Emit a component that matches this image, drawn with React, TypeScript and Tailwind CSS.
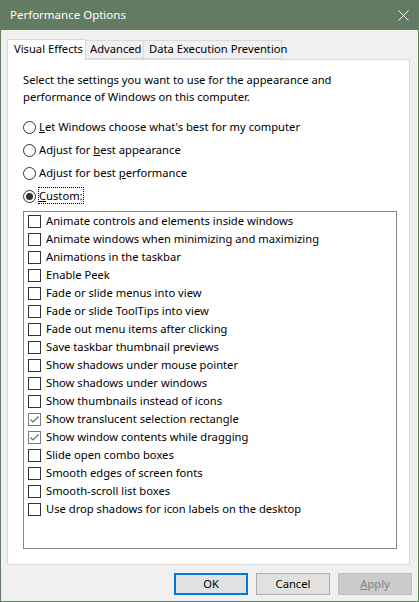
import React from "react";

const effects: { label: string; checked?: boolean }[] = [
  { label: "Animate controls and elements inside windows" },
  { label: "Animate windows when minimizing and maximizing" },
  { label: "Animations in the taskbar" },
  { label: "Enable Peek" },
  { label: "Fade or slide menus into view" },
  { label: "Fade or slide ToolTips into view" },
  { label: "Fade out menu items after clicking" },
  { label: "Save taskbar thumbnail previews" },
  { label: "Show shadows under mouse pointer" },
  { label: "Show shadows under windows" },
  { label: "Show thumbnails instead of icons" },
  { label: "Show translucent selection rectangle", checked: true },
  { label: "Show window contents while dragging", checked: true },
  { label: "Slide open combo boxes" },
  { label: "Smooth edges of screen fonts" },
  { label: "Smooth-scroll list boxes" },
  { label: "Use drop shadows for icon labels on the desktop" },
];

function Radio({ checked, children }: { checked?: boolean; children: React.ReactNode }) {
  return (
    <div className="flex h-[23px] items-center">
      <span className="flex h-[13px] w-[13px] items-center justify-center rounded-full border border-[#333333] bg-white">
        {checked ? <span className="h-[7px] w-[7px] rounded-full bg-[#333333]" /> : null}
      </span>
      <span className="ml-[3px]">{children}</span>
    </div>
  );
}

function Checkbox({ checked, label }: { checked?: boolean; label: string }) {
  return (
    <div className="flex h-[18px] items-center pl-[4px]">
      <span
        className={`flex h-[13px] w-[13px] items-center justify-center border bg-white ${
          checked ? "border-[#7a7a7a]" : "border-[#333333]"
        }`}
      >
        {checked ? (
          <svg width="11" height="11" viewBox="0 0 11 11">
            <path d="M1.5 5.5 L4 8 L9.5 2.5" fill="none" stroke="#6a6a6a" strokeWidth="1.2" />
          </svg>
        ) : null}
      </span>
      <span className="ml-[5px]">{label}</span>
    </div>
  );
}

export default function App() {
  return (
    <div
      className="flex h-[602px] w-[419px] flex-col whitespace-nowrap bg-[#637b62] text-[11.2px] text-black"
      style={{ fontFamily: '"Noto Sans", "Open Sans", sans-serif' }}
    >
      <div className="flex h-[30px] items-center justify-between pl-[10px] pr-[10px] text-[11.5px] text-white">
        <span>Performance Options</span>
        <svg width="11" height="11" viewBox="0 0 11 11">
          <path d="M0.5 0.5 L10.5 10.5 M10.5 0.5 L0.5 10.5" stroke="white" strokeWidth="1" />
        </svg>
      </div>

      <div className="mx-[1px] mb-[1px] flex flex-1 flex-col bg-[#f0f0f0] px-[6px] pt-[8px]">
        <div className="relative z-10 flex h-[21px] items-end">
          <div className="mb-[-1px] flex h-[21px] w-[79px] items-center border border-b-0 border-[#d9d9d9] bg-white pl-[6px] pb-[2px]">
            Visual Effects
          </div>
          <div className="flex h-[19px] w-[58px] items-center border border-l-0 border-[#d9d9d9] bg-[#f0f0f0] pl-[4px]">
            Advanced
          </div>
          <div className="flex h-[19px] w-[138px] items-center border border-l-0 border-[#d9d9d9] bg-[#f0f0f0] pl-[5px]">
            Data Execution Prevention
          </div>
        </div>

        <div className="flex h-[506px] w-[403px] flex-col border border-[#d9d9d9] bg-white pl-[15px] pr-[13px]">
          <p className="mt-[11px] leading-[17px]">
            Select the settings you want to use for the appearance and
            <br />
            performance of Windows on this computer.
          </p>

          <div className="mt-[11px] flex flex-col">
            <Radio>
              <u>L</u>et Windows choose what's best for my computer
            </Radio>
            <Radio>
              Adjust for <u>b</u>est appearance
            </Radio>
            <Radio>
              Adjust for best <u>p</u>erformance
            </Radio>
            <Radio checked>
              <span className="outline outline-1 outline-dotted outline-black">
                <u>C</u>ustom:
              </span>
            </Radio>
          </div>

          <div className="mt-[3px] h-[338px] w-[374px] border border-[#828790] bg-white">
            {effects.map((e) => (
              <Checkbox key={e.label} label={e.label} checked={e.checked} />
            ))}
          </div>
        </div>

        <div className="mt-[8px] flex justify-end gap-[8px]">
          <button className="h-[22px] w-[74px] border-2 border-[#0078d7] bg-[#e1e1e1]">OK</button>
          <button className="h-[22px] w-[74px] border border-[#adadad] bg-[#e1e1e1]">Cancel</button>
          <button className="h-[22px] w-[74px] border border-[#bfbfbf] bg-[#cccccc] text-[#838383]">
            <u>A</u>pply
          </button>
        </div>
      </div>
    </div>
  );
}
